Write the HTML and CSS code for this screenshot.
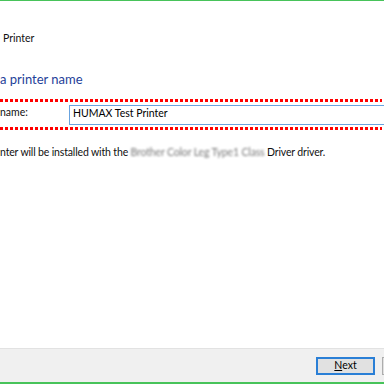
FILE: index.html
```html
<!DOCTYPE html>
<html lang="en">
<head>
    <title>Add Printer</title>
    <link rel="stylesheet" href="styles.css">
</head>
<body>
    <div class="window">
        <div class="content">
            <div class="caption">Printer</div>
            <h1 class="instruction">a printer name</h1>

            <div class="name-row">
                <label class="name-label">name:</label>
                <div class="name-input">HUMAX Test Printer</div>
            </div>

            <p class="driver-note">nter will be installed with the <span class="blurred">Brother Color Leg Type1 Class</span> Driver driver.</p>
        </div>

        <div class="footer">
            <button class="btn btn-default"><u>N</u>ext</button>
            <button class="btn" aria-label="Cancel"></button>
        </div>
    </div>
</body>
</html>
```

FILE: styles.css
```css
body {
    margin: 0;
    padding: 0;
    background-color: #fff;
    font-family: Lato, "Open Sans", sans-serif;
    font-size: 10.5px;
    color: #111;
}

.window {
    width: 384px;
    height: 384px;
    box-sizing: border-box;
    display: flex;
    flex-direction: column;
    overflow: hidden;
    border-top: 1px solid #47c35a;
    border-bottom: 2px solid #47c35a;
}

.content {
    flex: 1;
}

.caption {
    margin: 30px 0 0 3px;
    line-height: 15px;
}

.instruction {
    margin: 24px 0 0 0;
    font-size: 13px;
    font-weight: normal;
    line-height: 18px;
    color: #1f3f99;
}

.name-row {
    display: flex;
    align-items: flex-start;
    width: 382px;
    margin-top: 11px;
    padding: 6px 0 5px 0;
    background-image:
        repeating-linear-gradient(90deg, #f00 0 3px, transparent 3px 5px),
        repeating-linear-gradient(90deg, #f00 0 3px, transparent 3px 5px);
    background-size: 100% 3px;
    background-position: 0 0, 0 100%;
    background-repeat: no-repeat;
}

.name-label {
    width: 69px;
    line-height: 14px;
}

.name-input {
    flex: 1;
    height: 20px;
    box-sizing: border-box;
    margin-right: -10px;
    padding: 0 3px 4px 3px;
    border: 1px solid #68a3df;
    line-height: 14px;
    color: #000;
}

.driver-note {
    margin: 15px 0 0 0;
    line-height: 15px;
    letter-spacing: -0.15px;
}

.blurred {
    color: #7a7a7a;
    filter: blur(0.9px);
}

.footer {
    height: 34px;
    box-sizing: border-box;
    display: flex;
    gap: 7px;
    padding: 8px 0 0 316px;
    background-color: #f0f0f0;
    border-top: 1px solid #e2e2e2;
}

.btn {
    flex: none;
    width: 59px;
    height: 18px;
    box-sizing: border-box;
    padding: 0 0 2px 0;
    border: 1px solid #adadad;
    background-color: #e1e1e1;
    font-family: inherit;
    font-size: 10.5px;
    line-height: 12px;
    color: #000;
}

.btn-default {
    border: 2px solid #2a7fd6;
}
```
